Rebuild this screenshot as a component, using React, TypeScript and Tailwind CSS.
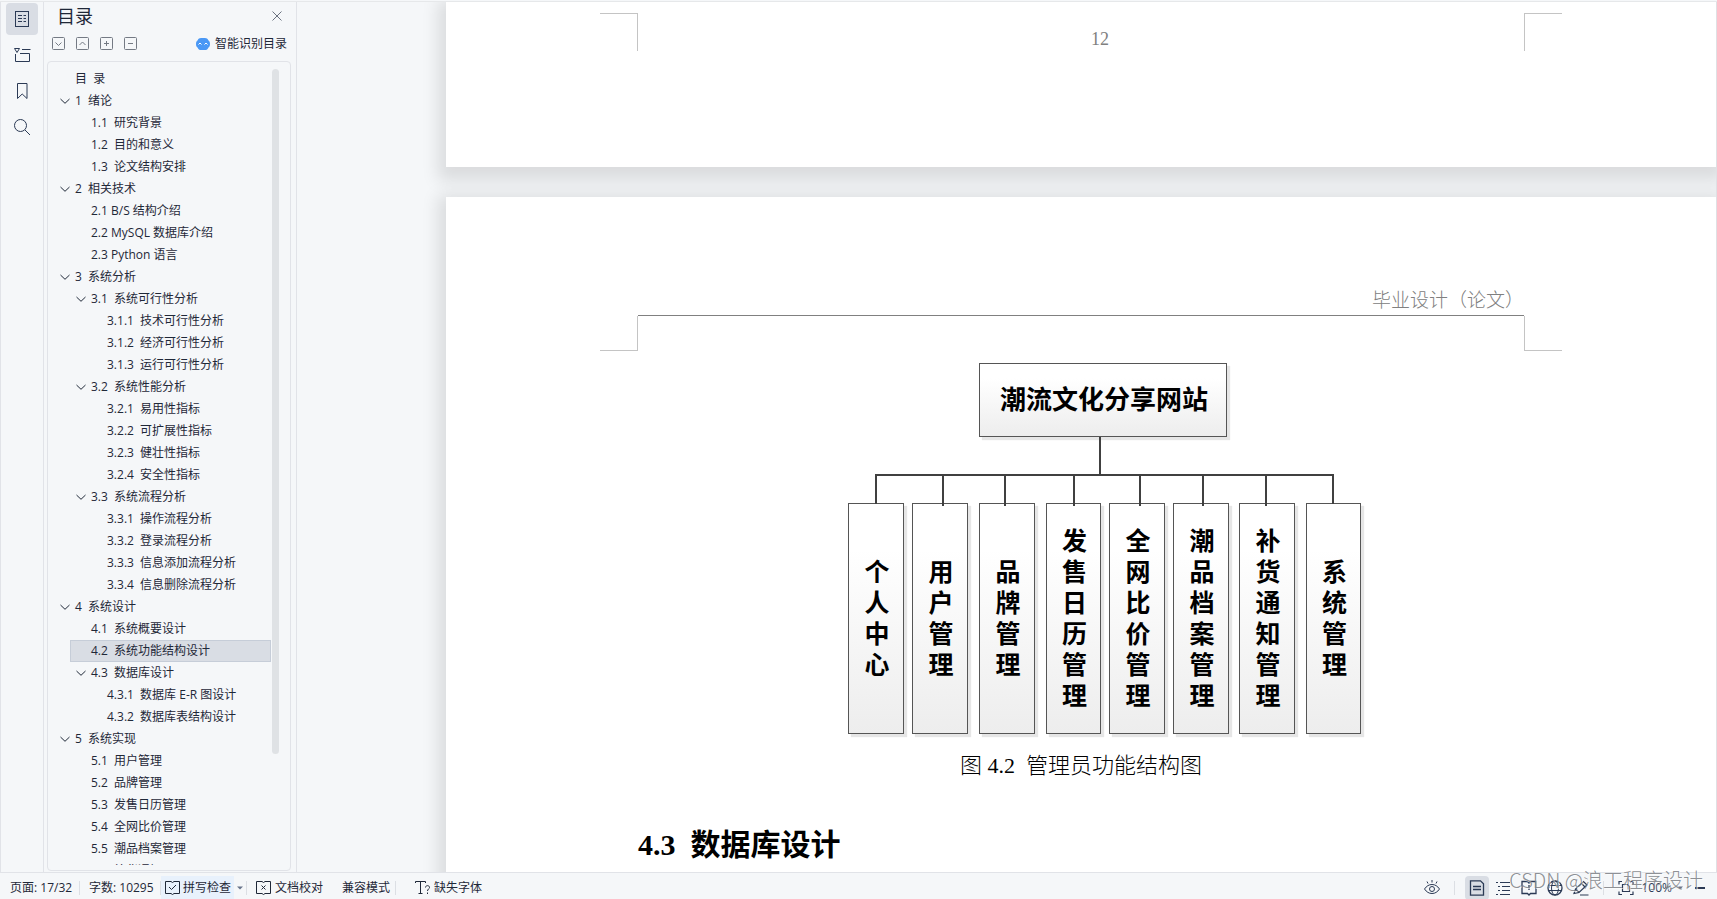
import { useState, type ReactNode } from "react";

interface OutlineItem {
  level: 1 | 2 | 3;
  label: string;
  open?: boolean;
}

const outline: OutlineItem[] = [
  { level: 1, label: "目  录" },
  { level: 1, label: "1  绪论", open: true },
  { level: 2, label: "1.1  研究背景" },
  { level: 2, label: "1.2  目的和意义" },
  { level: 2, label: "1.3  论文结构安排" },
  { level: 1, label: "2  相关技术", open: true },
  { level: 2, label: "2.1 B/S 结构介绍" },
  { level: 2, label: "2.2 MySQL 数据库介绍" },
  { level: 2, label: "2.3 Python 语言" },
  { level: 1, label: "3  系统分析", open: true },
  { level: 2, label: "3.1  系统可行性分析", open: true },
  { level: 3, label: "3.1.1  技术可行性分析" },
  { level: 3, label: "3.1.2  经济可行性分析" },
  { level: 3, label: "3.1.3  运行可行性分析" },
  { level: 2, label: "3.2  系统性能分析", open: true },
  { level: 3, label: "3.2.1  易用性指标" },
  { level: 3, label: "3.2.2  可扩展性指标" },
  { level: 3, label: "3.2.3  健壮性指标" },
  { level: 3, label: "3.2.4  安全性指标" },
  { level: 2, label: "3.3  系统流程分析", open: true },
  { level: 3, label: "3.3.1  操作流程分析" },
  { level: 3, label: "3.3.2  登录流程分析" },
  { level: 3, label: "3.3.3  信息添加流程分析" },
  { level: 3, label: "3.3.4  信息删除流程分析" },
  { level: 1, label: "4  系统设计", open: true },
  { level: 2, label: "4.1  系统概要设计" },
  { level: 2, label: "4.2  系统功能结构设计" },
  { level: 2, label: "4.3  数据库设计", open: true },
  { level: 3, label: "4.3.1  数据库 E-R 图设计" },
  { level: 3, label: "4.3.2  数据库表结构设计" },
  { level: 1, label: "5  系统实现", open: true },
  { level: 2, label: "5.1  用户管理" },
  { level: 2, label: "5.2  品牌管理" },
  { level: 2, label: "5.3  发售日历管理" },
  { level: 2, label: "5.4  全网比价管理" },
  { level: 2, label: "5.5  潮品档案管理" },
  { level: 2, label: "5.6  补货通知" },
];

const indent = { 1: "ml-1.5", 2: "ml-[22px]", 3: "ml-[38px]" };

const modules = [
  { name: "个人中心", place: "left-0 w-[56px]" },
  { name: "用户管理", place: "left-[64px] w-[56px]" },
  { name: "品牌管理", place: "left-[131px] w-[56px]" },
  { name: "发售日历管理", place: "left-[198px] w-[55px]" },
  { name: "全网比价管理", place: "left-[261px] w-[56px]" },
  { name: "潮品档案管理", place: "left-[325px] w-[56px]" },
  { name: "补货通知管理", place: "left-[391px] w-[56px]" },
  { name: "系统管理", place: "left-[458px] w-[55px]" },
];

const connectors =
  "M252 74V112M28 141V112H485V141M95 112V143M157 112V143M226 112V143M292 112V143M355 112V143M418 112V143";

function Icon({ size = 16, children }: { size?: number; children: ReactNode }) {
  return (
    <svg
      width={size}
      height={size}
      viewBox={`0 0 ${size} ${size}`}
      fill="none"
      stroke="currentColor"
      aria-hidden="true"
      className="shrink-0"
    >
      {children}
    </svg>
  );
}

function RailButton({ label, active, children }: { label: string; active?: boolean; children: ReactNode }) {
  return (
    <button
      aria-label={label}
      className={`flex h-8 w-8 items-center justify-center rounded-sm ${active ? "bg-[#d9dde4]" : ""}`}
    >
      {children}
    </button>
  );
}

function ToolButton({ label, active, children }: { label: string; active?: boolean; children: ReactNode }) {
  return (
    <button
      aria-label={label}
      className={`flex h-6 w-6 items-center justify-center ${active ? "rounded-sm bg-[#d9dde4]" : ""}`}
    >
      {children}
    </button>
  );
}

function Separator() {
  return <span className="h-3.5 w-px shrink-0 bg-[#dcdfe4]" />;
}

function Caret() {
  return (
    <svg width="6" height="4" viewBox="0 0 6 4" aria-hidden="true">
      <path d="M0 .5h6L3 3.5z" fill="#67738a" />
    </svg>
  );
}

function Rail() {
  return (
    <nav className="flex w-11 shrink-0 flex-col items-center gap-1 border-x border-[#e1e3e8] pt-px text-[#2b3a55]">
      <RailButton label="目录" active>
        <Icon size={18}>
          <rect x="2.5" y="1.5" width="13" height="15" />
          <path d="M5 5.5h4M5 8.5h4M5 11.5h4M10.5 5.5H13M10.5 8.5H13M10.5 11.5H13" />
        </Icon>
      </RailButton>
      <RailButton label="章节">
        <Icon size={18}>
          <path d="M1.500 2.500h5L4 6.500zM9 3.500h8.500M2.500 8v7.500h14V7.500H7" />
        </Icon>
      </RailButton>
      <RailButton label="书签">
        <Icon size={18}>
          <path d="M4.500 1.500h9.500v15l-4.800-4.500-4.700 4.500z" />
        </Icon>
      </RailButton>
      <RailButton label="查找">
        <Icon size={18}>
          <circle cx="7.500" cy="7.500" r="6" />
          <path d="M12 12l5 5" />
        </Icon>
      </RailButton>
    </nav>
  );
}

function OutlinePanel() {
  const [selected, setSelected] = useState("4.2  系统功能结构设计");

  return (
    <aside className="flex w-[253px] shrink-0 flex-col border-r border-[#e1e3e8]">
      <div className="flex h-7 items-center justify-between px-[13px]">
        <h2 className="text-[18px]">目录</h2>
        <button aria-label="关闭" className="text-[#6b7280]">
          <Icon size={12}>
            <path d="M1.500 1.500l9 9M10.500 1.500l-9 9" />
          </Icon>
        </button>
      </div>
      <div className="flex h-[31px] items-center justify-between pr-[9px] pb-1 pl-2">
        <div className="flex gap-[11px] text-[#747a84]">
          <button aria-label="展开">
            <Icon size={13}>
              <rect x=".5" y=".5" width="12" height="12" rx="1" />
              <path d="M3.500 5.500l3 3 3-3" />
            </Icon>
          </button>
          <button aria-label="收起">
            <Icon size={13}>
              <rect x=".5" y=".5" width="12" height="12" rx="1" />
              <path d="M3.500 8l3-3 3 3" />
            </Icon>
          </button>
          <button aria-label="升级">
            <Icon size={13}>
              <rect x=".5" y=".5" width="12" height="12" rx="1" />
              <path d="M4 6.500h5M6.500 4v5" />
            </Icon>
          </button>
          <button aria-label="降级">
            <Icon size={13}>
              <rect x=".5" y=".5" width="12" height="12" rx="1" />
              <path d="M4 6.500h5" />
            </Icon>
          </button>
        </div>
        <button className="flex items-center gap-[5px] leading-4">
          <svg width="14" height="12" viewBox="0 0 14 12" aria-hidden="true">
            <path
              d="M5 0h4c1.500 0 2.800.9 3.300 2.300C13.500 3 14 4.300 14 6s-.5 3-1.700 3.700C11.800 11.100 10.500 12 9 12H5c-1.500 0-2.800-.9-3.300-2.300C.5 9 0 7.700 0 6s.5-3 1.700-3.700C2.200.9 3.500 0 5 0z"
              fill="#4a98f5"
            />
            <path d="M2.500 6.500L4 5l1.500 1.500M8.500 6.500L10 5l1.500 1.500" fill="none" stroke="#fff" />
          </svg>
          智能识别目录
        </button>
      </div>
      <div className="mr-[5px] mb-px ml-[3px] flex min-h-0 flex-1 rounded-sm border border-[#e1e3e8] pt-1.5 pb-[5px]">
        <ul className="min-w-0 flex-1 overflow-hidden">
          {outline.map((item) => (
            <li key={item.label} className={indent[item.level]}>
              <a
                href="#section"
                onClick={() => setSelected(item.label)}
                className={`flex h-[22px] items-center gap-[5px] border pl-[5px] whitespace-pre ${
                  item.label === selected ? "border-[#c6cdd8] bg-[#d9dde4]" : "border-transparent"
                }`}
              >
                <span className="w-2.5 shrink-0">
                  {item.open && (
                    <Icon size={10}>
                      <path d="M.5 3L5 7.300l4.500-4.300" />
                    </Icon>
                  )}
                </span>
                {item.label}
              </a>
            </li>
          ))}
        </ul>
        <div className="w-[19px] shrink-0 pt-px pl-px">
          <div className="h-[86%] w-[7px] rounded-full bg-[#dfe2e5]" />
        </div>
      </div>
    </aside>
  );
}

function FeatureDiagram() {
  return (
    <div className="relative h-[372px] w-[513px]">
      <div className="absolute top-0 left-[131px] flex h-[74px] w-[248px] items-center justify-center border border-[#555] bg-linear-to-b from-white from-20% to-[#ededed] pl-[3px] text-[26px] font-bold shadow-[3px_3px_1px_#e6e6e6]">
        潮流文化分享网站
      </div>
      {modules.map((m) => (
        <div
          key={m.name}
          className={`absolute top-[140px] flex h-[231px] items-center justify-center border border-[#555] bg-linear-to-b from-white from-20% to-[#ededed] pl-[3px] shadow-[3px_3px_1px_#e6e6e6] ${m.place}`}
        >
          <span className="w-[25px] text-[25px] leading-[31px] font-bold break-all">{m.name}</span>
        </div>
      ))}
      <svg width="513" height="372" viewBox="0 0 513 372" className="absolute inset-0" aria-hidden="true">
        <path d={connectors} fill="none" stroke="#404040" strokeWidth="2" />
      </svg>
    </div>
  );
}

function DocumentView() {
  return (
    <main className="flex min-w-0 flex-1 flex-col gap-[30px] overflow-hidden border-r border-[#dfe0e4] pl-[149px] font-['Liberation_Serif','Noto_Sans_CJK_SC',serif] text-black">
      <section className="shrink-0 bg-white px-48 pt-[11px] pb-[116px] shadow-[0_6px_16px_8px_rgba(0,0,0,0.11)]">
        <div className="-mx-[38px] flex h-[38px]">
          <span className="w-[38px] border-t border-r border-[#c4c4c4]" />
          <p className="flex-1 self-end pb-[3px] pl-[38px] text-center text-[18px] leading-[18px] text-[#808080]">12</p>
          <span className="w-[38px] border-t border-l border-[#c4c4c4]" />
        </div>
      </section>

      <section className="shrink-0 bg-white px-48 pt-[90px] pb-24 shadow-[0_6px_16px_8px_rgba(0,0,0,0.11)]">
        <p className="border-b border-[#808080] text-right text-[19px] leading-7 font-light text-[#808080]">
          毕业设计（论文）
        </p>
        <div className="-mx-[38px] flex h-[35px] justify-between">
          <span className="w-[38px] border-r border-b border-[#c4c4c4]" />
          <span className="w-[38px] border-b border-l border-[#c4c4c4]" />
        </div>
        <figure className="mt-3">
          <div className="flex justify-center pl-[46px]">
            <FeatureDiagram />
          </div>
          <figcaption className="mt-4 text-center text-[22px] leading-[30px] font-light whitespace-pre">
            图 4.2  管理员功能结构图
          </figcaption>
        </figure>
        <h3 className="mt-11 text-[30px] leading-10 font-bold whitespace-pre">4.3  数据库设计</h3>
      </section>
    </main>
  );
}

function StatusBar() {
  return (
    <footer className="relative flex h-[27px] shrink-0 items-center justify-between border-t border-[#e1e3e8] pt-[3px] pr-3 pl-2.5">
      <div className="flex items-center">
        <span className="w-[69px]">页面: 17/32</span>
        <Separator />
        <span className="w-20 pl-[9px]">字数: 10295</span>
        <Separator />
        <button className="flex h-6 items-center gap-[3px] bg-[#e8f1fc] pr-[3px] pl-1">
          <Icon size={15}>
            <path d="M6 1.500H.5v12H6l1.500 1 1.500-1h5.500v-12H9l-1.500 1zM4 7l2.500 2.500L11 5" />
          </Icon>
          拼写检查
        </button>
        <button aria-label="拼写检查选项" className="w-3 pl-[3px]">
          <Caret />
        </button>
        <Separator />
        <button className="ml-[9px] flex items-center gap-1">
          <Icon size={15}>
            <path d="M6 1.500H.5v12H6l1.500 1 1.500-1h5.500v-12H9l-1.500 1zM5.500 5.500l4 4M9.500 5.500l-4 4" />
          </Icon>
          文档校对
        </button>
        <button className="mr-[5px] ml-[19px]">兼容模式</button>
        <Separator />
        <button className="ml-[19px] flex items-center gap-1">
          <Icon size={15}>
            <path d="M.5 3V1.500h10V3M5.500 1.500v12M3.500 13.500h4M10.500 7.500c0-2.500 4-2.500 4 0 0 1.500-2 1.500-2 3.500M12.500 12.500v1.500" />
          </Icon>
          缺失字体
        </button>
      </div>

      <div className="flex items-center text-[#2b3a55]">
        <ToolButton label="护眼模式">
          <Icon size={16}>
            <path d="M.5 9c2-3 4.500-4.500 7.500-4.500s5.500 1.500 7.500 4.500c-2 3-4.500 4.500-7.500 4.500S2.500 12 .5 9zM8 0v2.500M3 1.500l1 2M13 1.500l-1 2" />
            <circle cx="8" cy="9" r="2.500" />
          </Icon>
        </ToolButton>
        <span className="px-2.5">
          <span className="block h-3.5 w-px bg-[#dcdfe4]" />
        </span>
        <div className="flex gap-0.5">
          <ToolButton label="页面视图" active>
            <Icon size={16}>
              <path d="M1.500.8h10l3 3v11.400h-13zM4 6.500h8M4 9.500h8" strokeWidth="1.300" />
            </Icon>
          </ToolButton>
          <ToolButton label="大纲视图">
            <Icon size={16}>
              <path d="M1 2.500h2M5 2.500h10M3 6.500h2M7 6.500h8M3 10.500h2M7 10.500h8M1 14.500h2M5 14.500h10" />
            </Icon>
          </ToolButton>
          <ToolButton label="阅读版式">
            <Icon size={16}>
              <path d="M6.500 1.500H1v12h5.500l1.500 1.500 1.500-1.500H15v-12H9.500L8 3zM8 5v5" strokeWidth="1.300" />
            </Icon>
          </ToolButton>
          <ToolButton label="Web 版式">
            <Icon size={16}>
              <circle cx="8" cy="8" r="7" strokeWidth="1.300" />
              <ellipse cx="8" cy="8" rx="3.500" ry="7" />
              <path d="M1.500 5.500h13M1.500 10.500h13" />
            </Icon>
          </ToolButton>
          <ToolButton label="写作模式">
            <Icon size={16}>
              <path
                d="M1 13.500l1.500-4.500 8-7.500 3.500 3.500-8 7.500zM2.500 9l3.500 3.500M8.500 3.500L12 7M7 15h8.500"
                strokeWidth="1.200"
              />
            </Icon>
          </ToolButton>
        </div>
        <span className="px-2.5">
          <span className="block h-3.5 w-px bg-[#dcdfe4]" />
        </span>
        <ToolButton label="最佳显示比例">
          <Icon size={16}>
            <path
              d="M1 4.500V1.500h3M12 1.500h3v3M15 11.500v3h-3M4 14.500H1v-3M4.500 4.500h5l2 2v5h-7z"
              strokeWidth="1.200"
            />
          </Icon>
        </ToolButton>
        <button className="flex items-center gap-[5px] pl-[3px]">
          100%
          <Caret />
        </button>
        <button aria-label="缩小" className="py-2 pl-3">
          <span className="block h-0.5 w-2.5 bg-[#2b3a55]" />
        </button>
      </div>

      <span className="pointer-events-none absolute right-3.5 bottom-1 font-['Noto_Sans_CJK_SC',sans-serif] text-[20px] leading-[30px] font-light whitespace-nowrap text-[#808388]/90 [text-shadow:1px_1px_0_#ffffffaa]">
        CSDN @浪工程序设计
      </span>
    </footer>
  );
}

export default function App() {
  return (
    <div className="flex h-screen flex-col overflow-hidden bg-[#f5f7f9] font-['Open_Sans','Noto_Sans_CJK_SC',sans-serif] text-[12px] text-[#1f2838]">
      <div className="h-0.5 shrink-0 border-b border-[#e6e8ea]" />
      <div className="flex min-h-0 flex-1">
        <Rail />
        <OutlinePanel />
        <DocumentView />
      </div>
      <StatusBar />
    </div>
  );
}
